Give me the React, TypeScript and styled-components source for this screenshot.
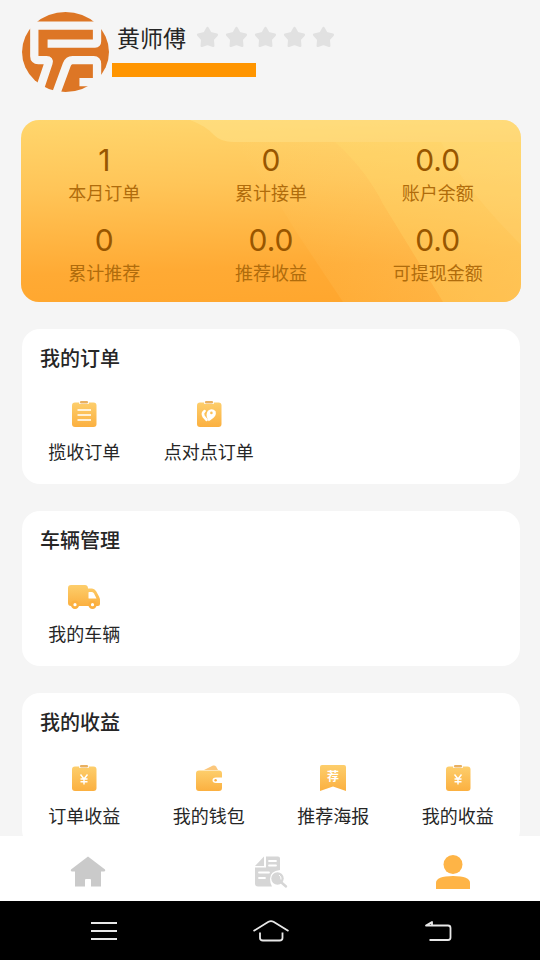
import React from "react";
import styled, { createGlobalStyle } from "styled-components";

const GlobalStyle = createGlobalStyle`
  * { box-sizing: border-box; }
  body {
    margin: 0;
    background: #f5f5f5;
    font-family: "Noto Sans CJK SC", sans-serif;
    color: #262626;
  }
  button {
    border: 0;
    padding: 0;
    background: none;
    font: inherit;
    color: inherit;
    cursor: pointer;
  }
  svg { display: block; flex: none; }
`;

const Screen = styled.div`
  display: flex;
  flex-direction: column;
  height: 100vh;
  overflow: hidden;
`;

const Content = styled.main`
  flex: 1;
  min-height: 0;
  overflow: hidden;
`;

const Profile = styled.header`
  display: flex;
  gap: 3px;
  padding: 12px 22px 28px;
`;

const ProfileInfo = styled.div`
  padding-top: 9px;
`;

const NameRow = styled.div`
  display: flex;
  align-items: center;
  gap: 10px;
  padding-left: 5px;
`;

const Name = styled.h1`
  margin: 0;
  font-size: 23px;
  line-height: 32px;
  font-weight: 400;
`;

const Stars = styled.div`
  display: flex;
  gap: 6px;
`;

const PhoneMask = styled.div`
  width: 144px;
  height: 14px;
  margin-top: 10px;
  background: #ff9500;
`;

const StatsCard = styled.section`
  position: relative;
  margin: 0 19px 27px 21px;
  padding: 24px 0 18px;
  border-radius: 18px;
  overflow: hidden;
  background: linear-gradient(178deg, #ffd66d 0%, #ffc558 35%, #ffaa34 78%, #ffa62d 100%);
`;

const StatsBackdrop = styled.svg`
  position: absolute;
  inset: 0;
  width: 100%;
  height: 100%;
`;

const StatsGrid = styled.div`
  position: relative;
  display: grid;
  grid-template-columns: repeat(3, 1fr);
  row-gap: 20px;
`;

const Stat = styled.div`
  display: flex;
  flex-direction: column;
  align-items: center;
  gap: 4px;
`;

const StatValue = styled.strong`
  font-family: Inter, sans-serif;
  font-size: 30px;
  line-height: 32px;
  font-weight: 400;
  color: #985600;
`;

const StatLabel = styled.span`
  font-size: 18px;
  line-height: 24px;
  color: #b06c0c;
`;

const Section = styled.section`
  margin: 0 20px 27px 22px;
  padding: 15px 0 21px;
  border-radius: 18px;
  background: #fff;
`;

const SectionTitle = styled.h2`
  margin: 0 18px 27px;
  font-size: 20px;
  line-height: 28px;
  font-weight: 500;
`;

const Actions = styled.div`
  display: grid;
  grid-template-columns: repeat(4, 1fr);
`;

const Action = styled.button`
  display: flex;
  flex-direction: column;
  align-items: center;
  gap: 8px;
`;

const ActionLabel = styled.span`
  font-size: 18px;
  line-height: 24px;
  white-space: nowrap;
`;

const TabBar = styled.nav`
  display: flex;
  flex: none;
  justify-content: space-between;
  align-items: center;
  height: 65px;
  padding: 6px 70px 0;
  background: #fff;
`;

const SystemBar = styled.footer`
  display: grid;
  flex: none;
  grid-template-columns: repeat(3, 1fr);
  justify-items: center;
  align-items: center;
  height: 59px;
  padding: 0 19px 0 21px;
  background: #000;
`;

function Logo() {
  return (
    <svg width="87" height="80" viewBox="20 20 262 241" role="img" aria-label="头像">
      <ellipse cx="151" cy="140.5" rx="131" ry="120.5" fill="#dd7625" />
      <g fill="none" stroke="#f5f5f5" strokeWidth="25">
        <path d="M97 115H240Q246 115 246 108V61H57V153Q57 165 69 165H94Q103 165 100 173L72 256" />
        <path d="M122 268L155 178Q160 165 172 165H236Q246 165 246 176V231H193" />
      </g>
    </svg>
  );
}

function Star() {
  return (
    <svg width="23" height="22" viewBox="0 0 23 22">
      <path
        d="M11.5 2L14.5 7.3L20.8 8.8L16.7 13.4L17.2 19.8L11.5 17.8L5.8 19.8L6.3 13.4L2.2 8.8L8.5 7.3Z"
        fill="#e1e1e1"
        stroke="#e1e1e1"
        strokeWidth="2.5"
        strokeLinejoin="round"
      />
    </svg>
  );
}

function Gold() {
  return (
    <defs>
      <linearGradient id="gold" x1="0" y1="0" x2="0" y2="1">
        <stop offset="0" stopColor="#fdce6c" />
        <stop offset="1" stopColor="#fbb040" />
      </linearGradient>
    </defs>
  );
}

function Clipboard({ children }: { children: React.ReactNode }) {
  return (
    <svg width="32" height="32" viewBox="0 0 32 32">
      <Gold />
      <rect x="4" y="3.5" width="24.5" height="24.5" rx="3" fill="url(#gold)" />
      <rect x="11" y="3" width="10" height="2" rx="1" fill="#fff" />
      <rect x="12" y="2" width="8" height="2.6" rx="1" fill="#e9b060" />
      {children}
    </svg>
  );
}

function OrderIcon() {
  return (
    <Clipboard>
      <path d="M9.5 11H23M9.5 16H23M9.5 21H23" stroke="#fff" strokeWidth="1.5" />
    </Clipboard>
  );
}

function RouteIcon() {
  return (
    <Clipboard>
      <path
        d="M11.6 12Q8.8 14 10.6 17.4L13.6 20.8"
        fill="none"
        stroke="#fff"
        strokeWidth="2.6"
        strokeLinecap="round"
      />
      <path
        d="M15.6 22.3C13.8 18.8 12.8 15.8 14.2 12.9C16 9.4 20.6 9.3 22.4 12.2C24.3 16 20.3 19.5 15.6 22.3Z"
        fill="#fff"
      />
      <circle cx="18.4" cy="13.9" r="1.3" fill="#fcc15a" />
    </Clipboard>
  );
}

function YuanIcon() {
  return (
    <Clipboard>
      <path
        d="M12.5 11.5L16 16L19.5 11.5M16 16V21.5M12.5 16H19.5M12.5 18.7H19.5"
        fill="none"
        stroke="#fff"
        strokeWidth="1.4"
      />
    </Clipboard>
  );
}

function TruckIcon() {
  return (
    <svg width="32" height="32" viewBox="0 0 32 32">
      <Gold />
      <path
        d="M3 4H17Q20 4 20 7.5H24Q26.5 7.5 28 10L31 15.5Q32 17.5 32 19.5V23Q32 25 30 25H3Q0 25 0 22V7Q0 4 3 4Z"
        fill="url(#gold)"
      />
      <path d="M21 11H24Q25.2 11 26 12.5L28.5 17.5H21Q20.5 17.5 20.5 17V11.5Q20.5 11 21 11Z" fill="#fff" />
      <g fill="#fff" stroke="#fbb040" strokeWidth="2.6">
        <circle cx="7" cy="23.7" r="2.9" />
        <circle cx="24.5" cy="23.7" r="2.9" />
      </g>
    </svg>
  );
}

function WalletIcon() {
  return (
    <svg width="32" height="32" viewBox="0 0 32 32">
      <Gold />
      <path d="M11 7L20 2.6Q22 2 23 3.5L25 7Z" fill="#fbc77c" />
      <path
        d="M6 7.5H26Q29 7.5 29 10.5V14.5H23Q19.5 14.5 19.5 17.3Q19.5 20 23 20H29V25Q29 28 26 28H6Q3 28 3 25V10.5Q3 7.5 6 7.5Z"
        fill="url(#gold)"
      />
      <circle cx="22.6" cy="17.3" r="1.2" fill="#fbb040" />
    </svg>
  );
}

const PosterText = styled.text`
  font-size: 12px;
  font-weight: 700;
  text-anchor: middle;
  fill: #fff;
`;

function PosterIcon() {
  return (
    <svg width="32" height="32" viewBox="0 0 32 32">
      <Gold />
      <path d="M5 2H27Q29 2 29 4V28L16 23.5L3 28V4Q3 2 5 2Z" fill="url(#gold)" />
      <PosterText x="16" y="18">荐</PosterText>
    </svg>
  );
}

function HomeIcon() {
  return (
    <svg width="36" height="34" viewBox="0 0 36 34">
      <path
        d="M18 1.5L35 14.5Q36 16.5 33 16.5H31V31.5H21V25Q21 24 20 24H16Q15 24 15 25V31.5H5V16.5H3Q0 16.5 1 14.5Z"
        fill="#cacaca"
      />
    </svg>
  );
}

function RecordsIcon() {
  return (
    <svg width="34" height="34" viewBox="0 0 34 34">
      <g fill="#d6d6d6">
        <path d="M10 1.5V11H1Z" />
        <path d="M12 1.5H24Q26 1.5 26 3.5V14.5H1V12.5H12Z" />
        <path d="M1 14H26V15Q16 16 16 24Q16 28 18 31.5H4Q1 31.5 1 28.5Z" />
      </g>
      <path
        d="M15 6H22M15 10.5H22M5 17.5H15M5 23H11"
        stroke="#fff"
        strokeWidth="1.8"
        strokeLinecap="round"
      />
      <circle cx="23.5" cy="23.5" r="6.2" fill="#d6d6d6" />
      <path d="M25 20Q27.500 21.500 27 24.500" fill="none" stroke="#fff" strokeWidth="1" />
      <path d="M28 28L32 31.5" stroke="#d6d6d6" strokeWidth="2.4" strokeLinecap="round" />
    </svg>
  );
}

function PersonIcon() {
  return (
    <svg width="34" height="36" viewBox="0 0 34 36">
      <g fill="#feb446">
        <circle cx="17" cy="10.5" r="9.5" />
        <path d="M0 35V29Q0 22 17 22Q34 22 34 29V35Z" />
      </g>
    </svg>
  );
}

const SystemGlyph = styled.svg`
  fill: none;
  stroke: #e8e8e8;
  stroke-width: 1.8;
  stroke-linejoin: round;
`;

function MenuGlyph() {
  return (
    <SystemGlyph width="26" height="20" viewBox="0 0 26 20">
      <path d="M0 2H26M0 10H26M0 18H26" />
    </SystemGlyph>
  );
}

function HomeGlyph() {
  return (
    <SystemGlyph width="36" height="22" viewBox="0 0 36 22">
      <path d="M0.5 11L15.5 1.8Q18 0.5 20.5 1.8L35.5 11M7 12.5V18Q7 20.5 10 20.5H26.5Q29.5 20.5 29.5 18V12.5" />
    </SystemGlyph>
  );
}

function BackGlyph() {
  return (
    <SystemGlyph width="28" height="20" viewBox="0 0 28 20">
      <path d="M2 4.5L8 1V4.5ZM8 4.5H24Q26.5 4.5 26.5 7V16.5Q26.5 19 24 19H5.5" />
    </SystemGlyph>
  );
}

const stats = [
  { label: "本月订单", value: "1" },
  { label: "累计接单", value: "0" },
  { label: "账户余额", value: "0.0" },
  { label: "累计推荐", value: "0" },
  { label: "推荐收益", value: "0.0" },
  { label: "可提现金额", value: "0.0" },
];

const sections = [
  {
    title: "我的订单",
    actions: [
      { label: "揽收订单", Icon: OrderIcon },
      { label: "点对点订单", Icon: RouteIcon },
    ],
  },
  { title: "车辆管理", actions: [{ label: "我的车辆", Icon: TruckIcon }] },
  {
    title: "我的收益",
    actions: [
      { label: "订单收益", Icon: YuanIcon },
      { label: "我的钱包", Icon: WalletIcon },
      { label: "推荐海报", Icon: PosterIcon },
      { label: "我的收益", Icon: YuanIcon },
    ],
  },
];

export default function App() {
  return (
    <Screen>
      <GlobalStyle />
      <Content>
        <Profile>
          <Logo />
          <ProfileInfo>
            <NameRow>
              <Name>黄师傅</Name>
              <Stars role="img" aria-label="评分">
                {[1, 2, 3, 4, 5].map((n) => (
                  <Star key={n} />
                ))}
              </Stars>
            </NameRow>
            <PhoneMask />
          </ProfileInfo>
        </Profile>

        <StatsCard>
          <StatsBackdrop viewBox="0 0 500 182" preserveAspectRatio="none" aria-hidden="true">
            <defs>
              <linearGradient id="sheen" x1="0" y1="0" x2="1" y2="0">
                <stop offset="0" stopColor="#ffe088" stopOpacity="0" />
                <stop offset="1" stopColor="#ffe088" stopOpacity="0.3" />
              </linearGradient>
            </defs>
            <path d="M169 0Q185 6 193 15Q200 22 212 22H500V0Z" fill="#ffe995" fillOpacity="0.4" />
            <path d="M212 22H500V182H322L274 110Q245 60 212 22Z" fill="url(#sheen)" />
            <path d="M314 22Q345 50 362 84L422 182H500V22Z" fill="#ffe070" fillOpacity="0.26" />
            <path d="M420 22Q440 65 500 125V22Z" fill="#ffe490" fillOpacity="0.14" />
          </StatsBackdrop>
          <StatsGrid>
            {stats.map(({ label, value }) => (
              <Stat key={label}>
                <StatValue>{value}</StatValue>
                <StatLabel>{label}</StatLabel>
              </Stat>
            ))}
          </StatsGrid>
        </StatsCard>

        {sections.map(({ title, actions }) => (
          <Section key={title}>
            <SectionTitle>{title}</SectionTitle>
            <Actions>
              {actions.map(({ label, Icon }) => (
                <Action key={label} type="button">
                  <Icon />
                  <ActionLabel>{label}</ActionLabel>
                </Action>
              ))}
            </Actions>
          </Section>
        ))}
      </Content>

      <TabBar>
        <button type="button" aria-label="首页">
          <HomeIcon />
        </button>
        <button type="button" aria-label="订单记录">
          <RecordsIcon />
        </button>
        <button type="button" aria-label="我的" aria-current="page">
          <PersonIcon />
        </button>
      </TabBar>

      <SystemBar>
        <button type="button" aria-label="菜单">
          <MenuGlyph />
        </button>
        <button type="button" aria-label="主屏幕">
          <HomeGlyph />
        </button>
        <button type="button" aria-label="返回">
          <BackGlyph />
        </button>
      </SystemBar>
    </Screen>
  );
}
